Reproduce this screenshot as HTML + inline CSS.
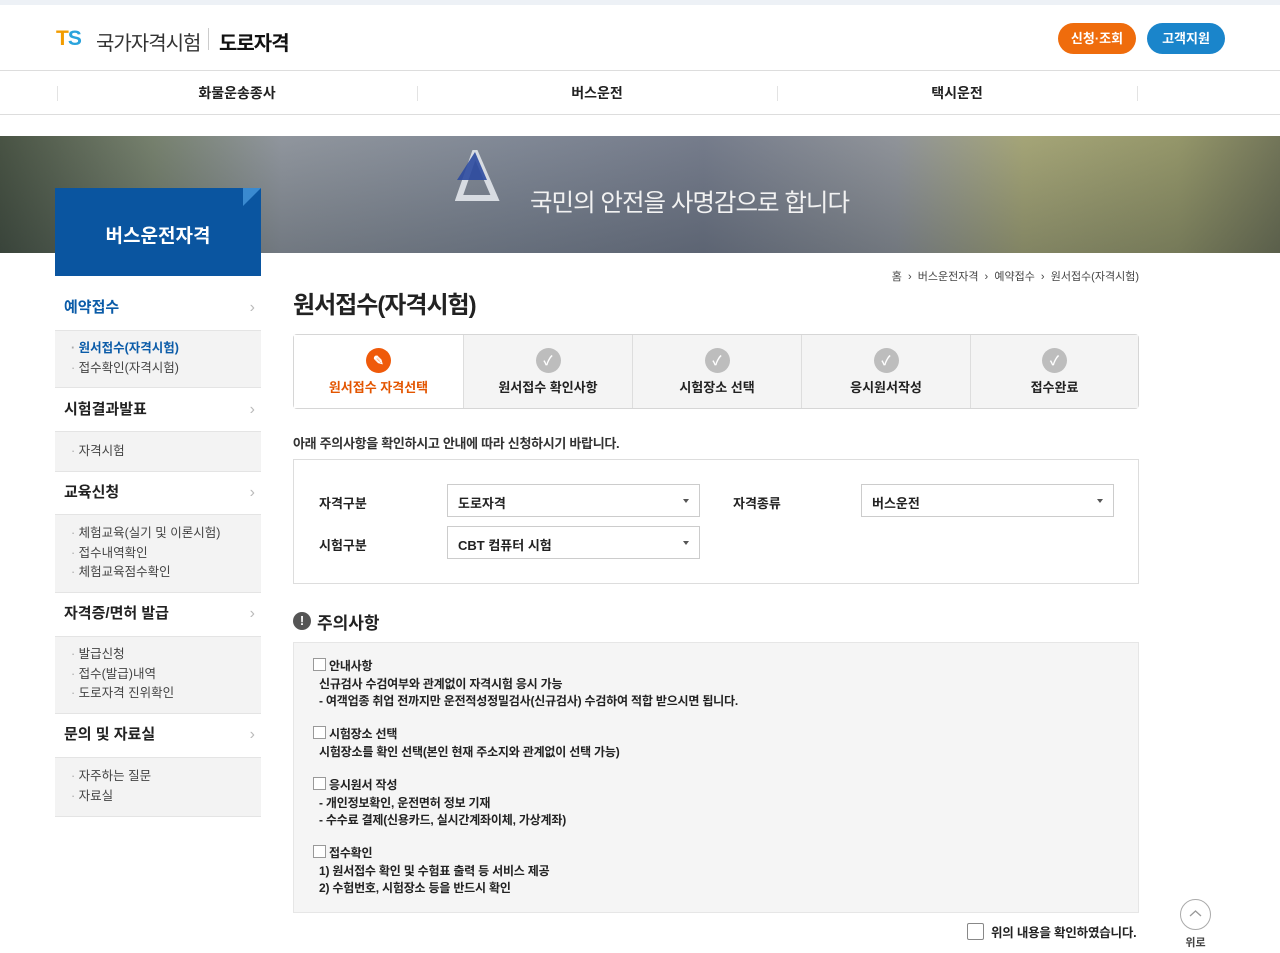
<!DOCTYPE html>
<html><head><meta charset="utf-8"><style>
*{margin:0;padding:0;box-sizing:border-box}
body{width:1280px;height:953px;overflow:hidden;background:#fff;font-family:"Liberation Sans","Noto Sans CJK KR",sans-serif;color:#222;position:relative}
.a{position:absolute}
.side .h{position:absolute;left:55px;width:206px;font-size:15px;font-weight:bold;padding-left:9px;border-bottom:1px solid #e4e4e4}
.side .h:after{content:"›";position:absolute;right:6px;color:#bbb;font-weight:normal;font-size:16px}
.side .s{position:absolute;left:55px;width:206px;background:#f3f3f3;font-size:12.5px;color:#444;padding-left:16px;line-height:19.5px;border-bottom:1px solid #e4e4e4}
.side .s span:before{content:"· ";color:#aaa}
.step{position:absolute;top:335px;height:73px;width:169px;background:#f4f4f4;border-left:1px solid #ddd;text-align:center;font-size:13px;font-weight:bold}
.step .c{width:25px;height:25px;border-radius:50%;background:#bdbdbd;margin:13px auto 4px;color:#fff;font-size:13px;line-height:25px}
.sel{position:absolute;height:33px;width:253px;border:1px solid #ccc;font-size:13px;font-weight:bold;padding:8px 10px}
.sel:after{content:"";position:absolute;right:10px;top:14px;border:3px solid transparent;border-top:4px solid #555}
.lab{position:absolute;font-size:13px;font-weight:bold}
.nt{position:absolute;left:319px;font-size:12px;line-height:17.5px;font-weight:bold;color:#222;letter-spacing:-0.2px}
.nt b:before{content:"";display:inline-block;width:11px;height:11px;border:1px solid #999;background:#fff;margin:0 3px -1px -9px}
.nt b{font-weight:bold;padding-left:3px}
</style></head><body>
<div class="a" style="left:0;top:0;width:1280px;height:5px;background:#edf1f6"></div>
<div class="a" style="left:56px;top:27px;font-size:21px;font-weight:bold;color:#f29c00;letter-spacing:-1px">T<span style="color:#2aa3dc">S</span></div>
<div class="a" style="left:96px;top:27px;font-size:20px;color:#333;letter-spacing:-1px">국가자격시험</div>
<div class="a" style="left:208px;top:28px;width:1px;height:22px;background:#ccc"></div>
<div class="a" style="left:219px;top:27px;font-size:20px;font-weight:bold;color:#111;letter-spacing:-1px">도로자격</div>
<div class="a" style="left:1058px;top:23px;width:78px;height:31px;border-radius:16px;background:#ef6c0c;color:#fff;font-size:13px;font-weight:bold;text-align:center;line-height:31px">신청·조회</div>
<div class="a" style="left:1147px;top:23px;width:78px;height:31px;border-radius:16px;background:#1a85cb;color:#fff;font-size:13px;font-weight:bold;text-align:center;line-height:31px">고객지원</div>
<div class="a" style="left:0;top:70px;width:1280px;height:1px;background:#ddd"></div>
<div class="a" style="left:0;top:114px;width:1280px;height:1px;background:#ddd"></div>
<div class="a" style="left:57px;top:86px;width:1px;height:15px;background:#e3e3e3"></div>
<div class="a" style="left:417px;top:86px;width:1px;height:15px;background:#e3e3e3"></div>
<div class="a" style="left:777px;top:86px;width:1px;height:15px;background:#e3e3e3"></div>
<div class="a" style="left:1137px;top:86px;width:1px;height:15px;background:#e3e3e3"></div>
<div class="a" style="left:57px;top:83px;width:360px;text-align:center;font-size:14px;font-weight:bold">화물운송종사</div>
<div class="a" style="left:417px;top:83px;width:360px;text-align:center;font-size:14px;font-weight:bold">버스운전</div>
<div class="a" style="left:777px;top:83px;width:360px;text-align:center;font-size:14px;font-weight:bold">택시운전</div>
<div class="a" style="left:0;top:136px;width:1280px;height:117px;background:linear-gradient(90deg,#3f4a3a 0%,#6f7a66 12%,#8a9098 22%,#7a8290 40%,#6e7585 55%,#8a8e94 70%,#a0a070 80%,#8f9162 92%,#6b6e50 100%)"></div>
<div class="a" style="left:0;top:136px;width:1280px;height:117px;background:linear-gradient(180deg,rgba(255,255,255,.05),rgba(40,50,60,.25))"></div>
<svg class="a" style="left:455px;top:150px" width="65" height="52"><polygon points="20,2 40,48 4,48" fill="none" stroke="#d8dce2" stroke-width="6"/><polygon points="20,2 32,30 2,30" fill="#2c4aa0" opacity=".9"/></svg>
<div class="a" style="left:530px;top:184px;font-size:24.5px;color:#f2f2f2;letter-spacing:-1px">국민의 안전을 사명감으로 합니다</div>
<div class="a" style="left:55px;top:188px;width:206px;height:88px;background:#0a55a0"></div>
<div class="a" style="left:243px;top:188px;width:0;height:0;border-left:18px solid #3a8ad0;border-bottom:18px solid transparent"></div>
<div class="a" style="left:55px;top:221px;width:206px;text-align:center;color:#fff;font-size:19px;font-weight:bold">버스운전자격</div>
<div class="side">
<div class="h" style="top:288px;height:43px;line-height:40px;color:#0a5ba8">예약접수</div>
<div class="s" style="top:331px;height:57px;padding-top:8px"><span style="color:#0a5ba8;font-weight:bold">원서접수(자격시험)</span><br><span>접수확인(자격시험)</span></div>
<div class="h" style="top:388px;height:44px;line-height:44px">시험결과발표</div>
<div class="s" style="top:432px;height:40px;padding-top:10px"><span>자격시험</span></div>
<div class="h" style="top:472px;height:43px;line-height:42px">교육신청</div>
<div class="s" style="top:515px;height:78px;padding-top:9px"><span>체험교육(실기 및 이론시험)</span><br><span>접수내역확인</span><br><span>체험교육점수확인</span></div>
<div class="h" style="top:593px;height:44px;line-height:42px">자격증/면허 발급</div>
<div class="s" style="top:637px;height:77px;padding-top:8px"><span>발급신청</span><br><span>접수(발급)내역</span><br><span>도로자격 진위확인</span></div>
<div class="h" style="top:714px;height:44px;line-height:42px">문의 및 자료실</div>
<div class="s" style="top:758px;height:59px;padding-top:9px"><span>자주하는 질문</span><br><span>자료실</span></div>
</div>
<div class="a" style="right:141px;top:268px;font-size:11px;color:#444">홈 &nbsp;›&nbsp; 버스운전자격 &nbsp;›&nbsp; 예약접수 &nbsp;›&nbsp; 원서접수(자격시험)</div>
<div class="a" style="left:293px;top:285px;font-size:24px;font-weight:bold;letter-spacing:-1px">원서접수(자격시험)</div>
<div class="a" style="left:293px;top:334px;width:846px;height:75px;border:1px solid #d6d6d6;border-radius:4px;background:#f4f4f4"></div>
<div class="step" style="left:294px;background:#fff;border-left:none;color:#e35500"><div class="c" style="background:#ef5a0a">✎</div>원서접수 자격선택</div>
<div class="step" style="left:463px"><div class="c">✓</div>원서접수 확인사항</div>
<div class="step" style="left:632px"><div class="c">✓</div>시험장소 선택</div>
<div class="step" style="left:801px"><div class="c">✓</div>응시원서작성</div>
<div class="step" style="left:970px;width:168px"><div class="c">✓</div>접수완료</div>
<div class="a" style="left:293px;top:433px;font-size:13px;font-weight:bold;color:#333;letter-spacing:-0.3px">아래 주의사항을 확인하시고 안내에 따라 신청하시기 바랍니다.</div>
<div class="a" style="left:293px;top:459px;width:846px;height:125px;border:1px solid #ddd"></div>
<div class="lab" style="left:319px;top:493px">자격구분</div>
<div class="sel" style="left:447px;top:484px">도로자격</div>
<div class="lab" style="left:733px;top:493px">자격종류</div>
<div class="sel" style="left:861px;top:484px">버스운전</div>
<div class="lab" style="left:319px;top:535px">시험구분</div>
<div class="sel" style="left:447px;top:526px">CBT 컴퓨터 시험</div>
<div class="a" style="left:293px;top:612px;width:18px;height:18px;border-radius:50%;background:#555;color:#fff;font-size:13px;font-weight:bold;text-align:center;line-height:18px">!</div>
<div class="a" style="left:317px;top:609px;font-size:17px;font-weight:bold">주의사항</div>
<div class="a" style="left:293px;top:642px;width:846px;height:271px;background:#f5f5f5;border:1px solid #e6e6e6"></div>
<div class="nt" style="top:658px"><b>안내사항</b><br>신규검사 수검여부와 관계없이 자격시험 응시 가능<br>- 여객업종 취업 전까지만 운전적성정밀검사(신규검사) 수검하여 적합 받으시면 됩니다.</div>
<div class="nt" style="top:726px"><b>시험장소 선택</b><br>시험장소를 확인 선택(본인 현재 주소지와 관계없이 선택 가능)</div>
<div class="nt" style="top:777px"><b>응시원서 작성</b><br>- 개인정보확인, 운전면허 정보 기재<br>- 수수료 결제(신용카드, 실시간계좌이체, 가상계좌)</div>
<div class="nt" style="top:845px"><b>접수확인</b><br>1) 원서접수 확인 및 수험표 출력 등 서비스 제공<br>2) 수험번호, 시험장소 등을 반드시 확인</div>
<div class="a" style="left:967px;top:923px;width:17px;height:17px;border:1px solid #888;border-radius:2px;background:#fff"></div>
<div class="a" style="left:991px;top:922px;font-size:12.5px;font-weight:bold;letter-spacing:-0.2px">위의 내용을 확인하였습니다.</div>
<div class="a" style="left:1180px;top:899px;width:31px;height:31px;border:1px solid #aaa;border-radius:50%"></div>
<svg class="a" style="left:1188px;top:908px" width="15" height="10"><polyline points="2,8 7.5,3 13,8" fill="none" stroke="#999" stroke-width="1.3"/></svg>
<div class="a" style="left:1180px;top:934px;width:31px;text-align:center;font-size:11px;font-weight:bold;color:#444">위로</div>
</body></html>
